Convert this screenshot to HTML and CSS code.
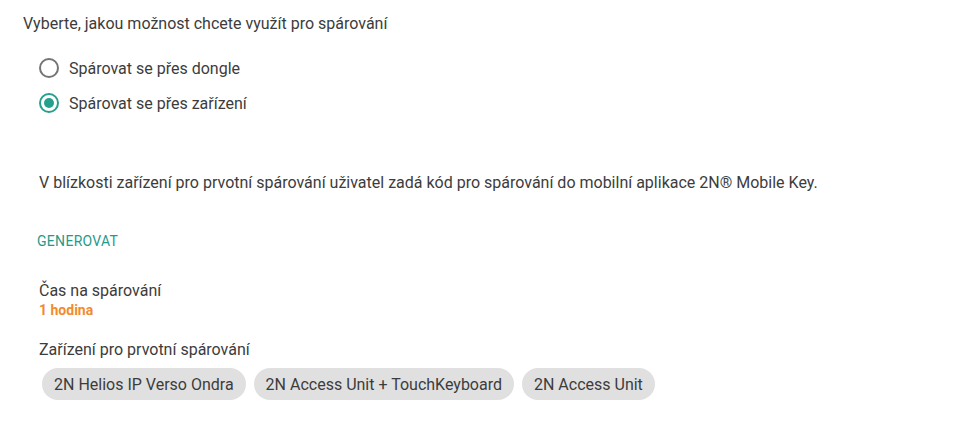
FILE: index.html
```html
<!DOCTYPE html>
<html lang="cs">
<head>
<meta charset="utf-8">
<link rel="stylesheet" href="styles.css">
</head>
<body>
<div class="page">
  <p class="heading">Vyberte, jakou možnost chcete využít pro spárování</p>
  <div class="radios">
    <label class="radio">
      <span class="circle"></span>
      <span class="radio-label">Spárovat se přes dongle</span>
    </label>
    <label class="radio checked">
      <span class="circle"><span class="dot"></span></span>
      <span class="radio-label">Spárovat se přes zařízení</span>
    </label>
  </div>
  <div class="section">
    <p class="desc">V blízkosti zařízení pro prvotní spárování uživatel zadá kód pro spárování do mobilní aplikace 2N® Mobile Key.</p>
    <button class="gen">GENEROVAT</button>
    <div class="field">
      <div class="field-label">Čas na spárování</div>
      <div class="field-value">1 hodina</div>
    </div>
    <div class="field devices">
      <div class="field-label">Zařízení pro prvotní spárování</div>
      <div class="chips">
        <span class="chip">2N Helios IP Verso Ondra</span>
        <span class="chip">2N Access Unit + TouchKeyboard</span>
        <span class="chip">2N Access Unit</span>
      </div>
    </div>
  </div>
</div>
</body>
</html>
```

FILE: styles.css
```css
* { box-sizing: border-box; }
html, body { margin: 0; padding: 0; background: #fff; }
body {
  font-family: Roboto, "Liberation Sans", sans-serif;
  font-size: 16px;
  color: #3c3c3c;
}
.page {
  padding: 15px 23px;
}
.heading {
  margin: 0;
  line-height: 18px;
}
.radios {
  display: flex;
  flex-direction: column;
  gap: 15px;
  padding: 25px 0 0 16px;
}
.radio {
  display: flex;
  align-items: center;
  gap: 10px;
  height: 20px;
}
.circle {
  width: 20px;
  height: 20px;
  border: 2px solid #757575;
  border-radius: 50%;
  display: flex;
  align-items: center;
  justify-content: center;
}
.checked .circle { border-color: #26a08e; }
.dot {
  width: 10px;
  height: 10px;
  border-radius: 50%;
  background: #26a08e;
}
.section {
  padding: 61px 0 0 16px;
}
.desc {
  margin: 0;
  line-height: 18px;
}
.gen {
  display: block;
  margin: 41px 0 0 -2px;
  padding: 0;
  border: 0;
  background: none;
  font-family: inherit;
  font-size: 14px;
  color: #1e9b8a;
  line-height: 16px;
  letter-spacing: 0.3px;
}
.field { margin-top: 33px; }
.field-label { line-height: 18px; }
.field-value {
  font-size: 14px;
  font-weight: 700;
  color: #f28b2d;
  line-height: 16px;
  margin-top: 2px;
}
.devices { margin-top: 23px; }
.chips {
  display: flex;
  gap: 8px;
  margin-top: 9px;
  padding-left: 3px;
}
.chip {
  height: 32px;
  display: inline-flex;
  align-items: center;
  padding: 0 12px;
  border-radius: 16px;
  background: #e0e0e0;
  color: #3c3c3c;
}
```
